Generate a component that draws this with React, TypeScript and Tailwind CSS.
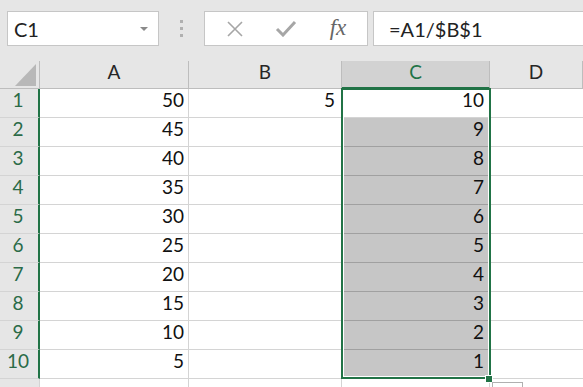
import React from 'react';

const font = { fontFamily: 'Lato, "Liberation Sans", sans-serif' };

const colA = [50, 45, 40, 35, 30, 25, 20, 15, 10, 5];
const colC = [10, 9, 8, 7, 6, 5, 4, 3, 2, 1];

function TopBar() {
  return (
    <div className="flex h-[61px] items-start bg-[#e6e6e6] pt-[11px]">
      {/* name box */}
      <div className="ml-[7px] flex h-[35px] w-[152px] items-center justify-between border border-[#c6c6c6] bg-white pl-[6px] pr-[10px]">
        <span className="text-[20px] text-[#222]">C1</span>
        <svg width="8" height="4" viewBox="0 0 8 4">
          <polygon points="0,0 8,0 4,4" fill="#8a8a8a" />
        </svg>
      </div>
      {/* grip dots */}
      <div className="flex w-[45px] flex-col items-center gap-[4px] pt-[9px]">
        <div className="h-[3px] w-[3px] bg-[#b0b0b0]" />
        <div className="h-[3px] w-[3px] bg-[#b0b0b0]" />
        <div className="h-[3px] w-[3px] bg-[#b0b0b0]" />
      </div>
      {/* cancel / enter / fx */}
      <div className="flex h-[35px] w-[164px] items-center border border-[#c6c6c6] bg-white">
        <div className="flex w-[52px] justify-center pl-[8px]">
          <svg width="18" height="16" viewBox="0 0 18 16">
            <path d="M2 1 L16 15 M16 1 L2 15" stroke="#a6a6a6" strokeWidth="1.6" />
          </svg>
        </div>
        <div className="flex w-[54px] justify-center pl-[4px]">
          <svg width="22" height="17" viewBox="0 0 22 17">
            <path d="M2 9 L8 15 L20 2" stroke="#a6a6a6" strokeWidth="3" fill="none" />
          </svg>
        </div>
        <div className="flex flex-1 justify-center pr-[2px]">
          <span
            className="text-[23px] italic text-[#666]"
            style={{ fontFamily: '"Liberation Serif", serif' }}
          >
            fx
          </span>
        </div>
      </div>
      {/* formula input */}
      <div className="ml-[5px] flex h-[35px] flex-1 items-center border-y border-l border-[#c6c6c6] bg-white pl-[15px]">
        <span className="text-[20px] text-[#222]">=A1/$B$1</span>
      </div>
    </div>
  );
}

function Corner() {
  return (
    <div className="h-[28px] border-r border-b border-[#bdbdbd] bg-[#e6e6e6]">
      <svg width="39" height="27" viewBox="0 0 39 27">
        <polygon points="15,25 36,25 36,3" fill="#b8b8b8" />
      </svg>
    </div>
  );
}

function ColHead({ label, active }: { label: string; active?: boolean }) {
  return (
    <div
      className={
        active
          ? 'flex h-[28px] items-end justify-center border-r border-b-2 border-r-[#bdbdbd] border-b-[#217346] bg-[#d2d2d2] pb-[1px] text-[19px] text-[#217346]'
          : 'flex h-[28px] items-end justify-center border-r border-b border-[#bdbdbd] bg-[#e6e6e6] pb-[2px] text-[19px] text-[#262626]'
      }
    >
      {label}
    </div>
  );
}

export default function App() {
  return (
    <div className="h-[387px] w-[583px] overflow-hidden bg-white" style={font}>
      <TopBar />
      <div className="relative">
        <div className="grid grid-cols-[40px_149px_153px_148px_1fr]">
          <Corner />
          <ColHead label="A" />
          <ColHead label="B" />
          <ColHead label="C" active />
          <ColHead label="D" />

          {colA.map((a, i) => (
            <React.Fragment key={i}>
              <div className="flex h-[29px] items-end justify-center border-r-2 border-b border-r-[#217346] border-b-[#d4d4d4] bg-[#e6e6e6] pb-[3px] pr-[2px] text-[19px] text-[#2b6b48]">
                {i + 1}
              </div>
              <div className="flex h-[29px] items-end justify-end border-r border-b border-[#d4d4d4] pb-[3px] pr-[4px] text-[19px] text-[#111]">
                {a}
              </div>
              <div className="flex h-[29px] items-end justify-end border-r border-b border-[#d4d4d4] pb-[3px] pr-[6px] text-[19px] text-[#111]">
                {i === 0 ? 5 : ''}
              </div>
              <div
                className={
                  i === 0
                    ? 'flex h-[29px] items-end justify-end border-r border-b border-[#d4d4d4] bg-white pb-[3px] pr-[5px] text-[19px] text-[#111]'
                    : 'flex h-[29px] items-end justify-end border-r border-b border-r-[#d4d4d4] border-b-[#a0a0a0] bg-[#c6c6c6] pb-[3px] pr-[5px] text-[19px] text-[#111]'
                }
              >
                {colC[i]}
              </div>
              <div className="h-[29px] border-b border-[#d4d4d4]" />
            </React.Fragment>
          ))}

          <div className="h-[29px] border-r border-[#d4d4d4] bg-[#e6e6e6]" />
          <div className="h-[29px] border-r border-[#d4d4d4]" />
          <div className="h-[29px] border-r border-[#d4d4d4]" />
          <div className="h-[29px] border-r border-[#d4d4d4]" />
          <div className="h-[29px]" />
        </div>

        {/* selection range C1:C10 */}
        <div className="pointer-events-none absolute left-[341px] top-[27px] h-[291px] w-[150px] border-2 border-[#217346] shadow-[inset_0_0_0_1px_white]" />
        {/* fill handle */}
        <div className="absolute left-[485px] top-[314px] h-[8px] w-[8px] border border-white bg-[#217346]" />
        {/* autofill options button */}
        <div className="absolute left-[492px] top-[321px] h-[20px] w-[31px] border border-[#b0b0b0] bg-white" />
      </div>
    </div>
  );
}
